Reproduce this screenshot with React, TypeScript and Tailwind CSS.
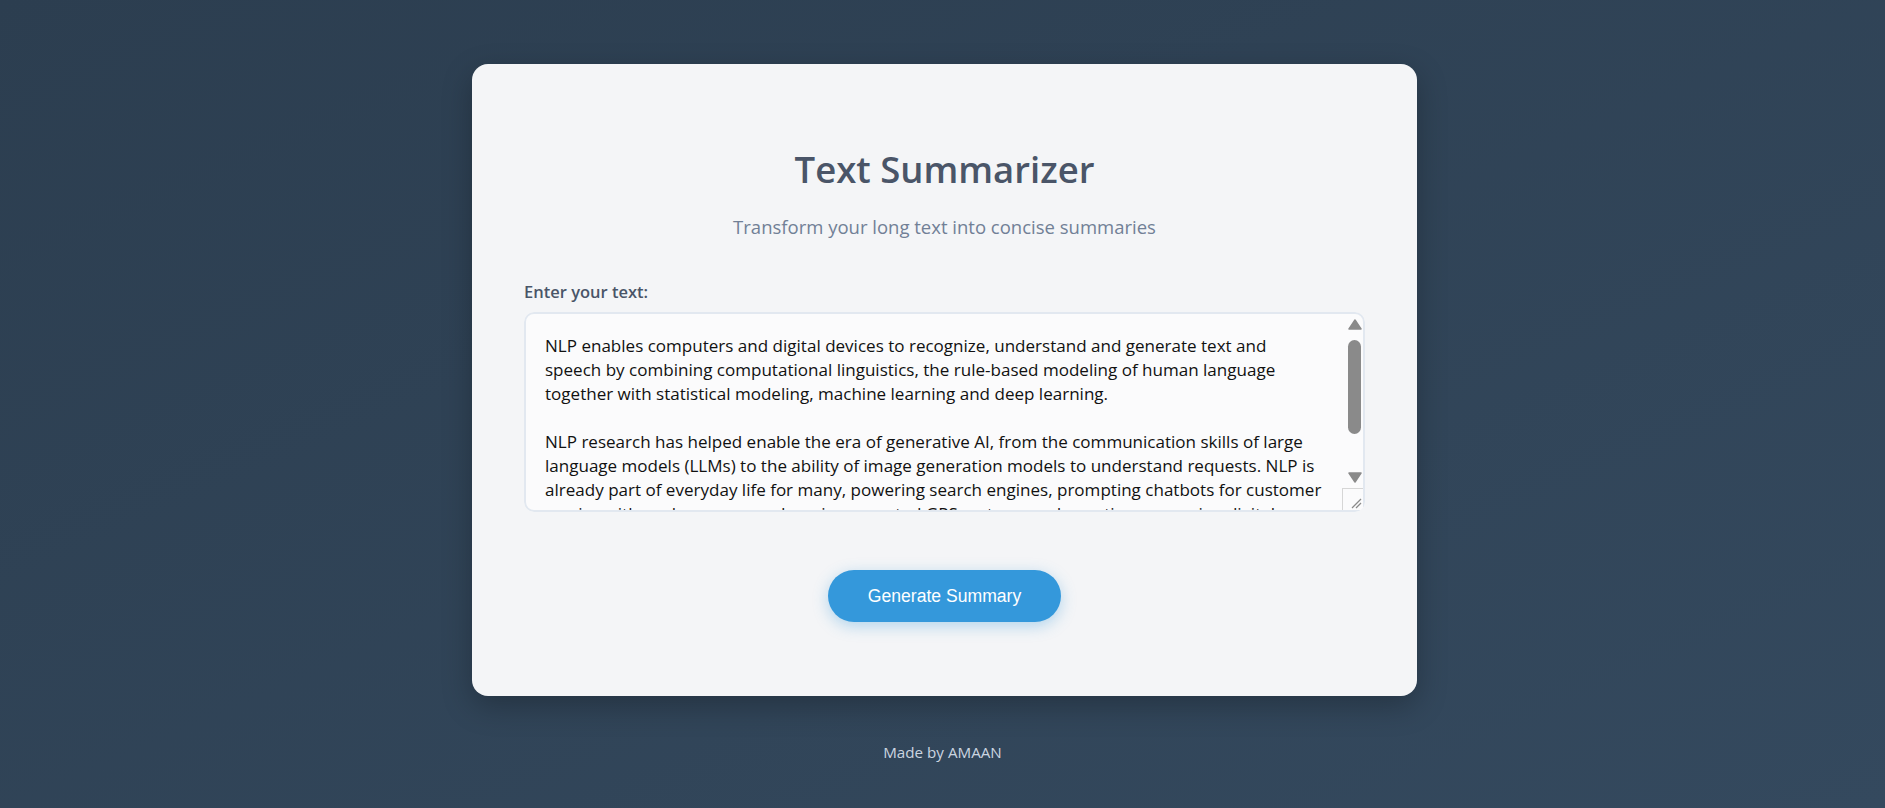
import { useState } from 'react'

const SAMPLE = [
  'NLP enables computers and digital devices to recognize, understand and generate text and',
  'speech by combining computational linguistics, the rule-based modeling of human language',
  'together with statistical modeling, machine learning and deep learning.',
  '',
  'NLP research has helped enable the era of generative AI, from the communication skills of large',
  'language models (LLMs) to the ability of image generation models to understand requests. NLP is',
  'already part of everyday life for many, powering search engines, prompting chatbots for customer',
  'service with spoken commands, voice-operated GPS systems and question-answering digital',
  "assistants on smartphones such as Amazon's Alexa, Apple's Siri and Microsoft's Cortana.",
].join('\n')

// browser scrollbar look (arrows, thumb, resize grip) drawn over the textarea
function ScrollbarOverlay() {
  return (
    <div className="pointer-events-none absolute top-[2px] right-[2px] bottom-[2px] w-[21px] flex flex-col items-end">
      <div className="w-[17px] flex flex-col items-center">
        <svg width="14" height="11" viewBox="0 0 14 11" className="mt-[5px]">
          <polygon points="7,1 13,10 1,10" fill="#8a8a8a" stroke="#8a8a8a" strokeWidth="1.5" strokeLinejoin="round" />
        </svg>
        <div className="mt-[10px] w-[13px] h-[94px] rounded-full bg-[#8a8a8a]" />
        <svg width="14" height="11" viewBox="0 0 14 11" className="mt-[38px]">
          <polygon points="1,1 13,1 7,10" fill="#8a8a8a" stroke="#8a8a8a" strokeWidth="1.5" strokeLinejoin="round" />
        </svg>
      </div>
      <div className="mt-auto w-[21px] h-[22px] border-t border-l border-[#d6d6d6] bg-[#fbfbfc] flex items-end justify-end">
        <svg width="12" height="12" viewBox="0 0 12 12" className="mb-[1px] mr-[1px]">
          <line x1="2" y1="11" x2="11" y2="2" stroke="#8a8a8a" strokeWidth="1.2" />
          <line x1="6" y1="11" x2="11" y2="6" stroke="#8a8a8a" strokeWidth="1.2" />
        </svg>
      </div>
    </div>
  )
}

export default function App() {
  const [text, setText] = useState(SAMPLE)

  return (
    <div className="min-h-screen bg-linear-to-br from-[#2c3e50] to-[#34495e] flex flex-col items-center pt-16 font-['Open_Sans',sans-serif]">
      {/* Card */}
      <div className="ml-[4px] w-[945px] bg-[#f4f5f7] rounded-2xl shadow-[0_10px_30px_rgba(0,0,0,0.25)] px-[52px] pt-[84px] pb-[74px] flex flex-col">
        <h1 className="text-center text-[36.5px] leading-[43px] font-semibold text-[#4a5568]">
          Text Summarizer
        </h1>
        <p className="text-center text-[18.5px] leading-6 text-[#718096] mt-[24px]">
          Transform your long text into concise summaries
        </p>

        <label className="mt-[41px] text-[16.5px] leading-6 font-semibold text-[#4a5568]">
          Enter your text:
        </label>
        <div className="relative mt-2 h-[200px] rounded-[10px] overflow-hidden">
          <textarea
            value={text}
            wrap="off"
            onChange={e => setText(e.target.value)}
            className="block h-full w-full resize-none bg-[#fbfbfc] border-2 border-[#e2e8f0] rounded-[10px] py-5 pl-[19px] pr-10 text-[17.05px] leading-6 text-[#111] outline-none overflow-hidden font-['Open_Sans',sans-serif]"
          />
          <ScrollbarOverlay />
        </div>

        <div className="flex justify-center mt-[58px]">
          <button className="bg-[#3498db] text-white rounded-full px-10 py-4 leading-5 text-[17.6px] font-['Liberation_Sans',Arial,sans-serif] shadow-[0_4px_15px_rgba(52,152,219,0.35)]">
            Generate Summary
          </button>
        </div>
      </div>

      <footer className="mt-[46px] text-[15.2px] leading-5 text-[#cbd5e0]">
        Made by AMAAN
      </footer>
    </div>
  )
}
